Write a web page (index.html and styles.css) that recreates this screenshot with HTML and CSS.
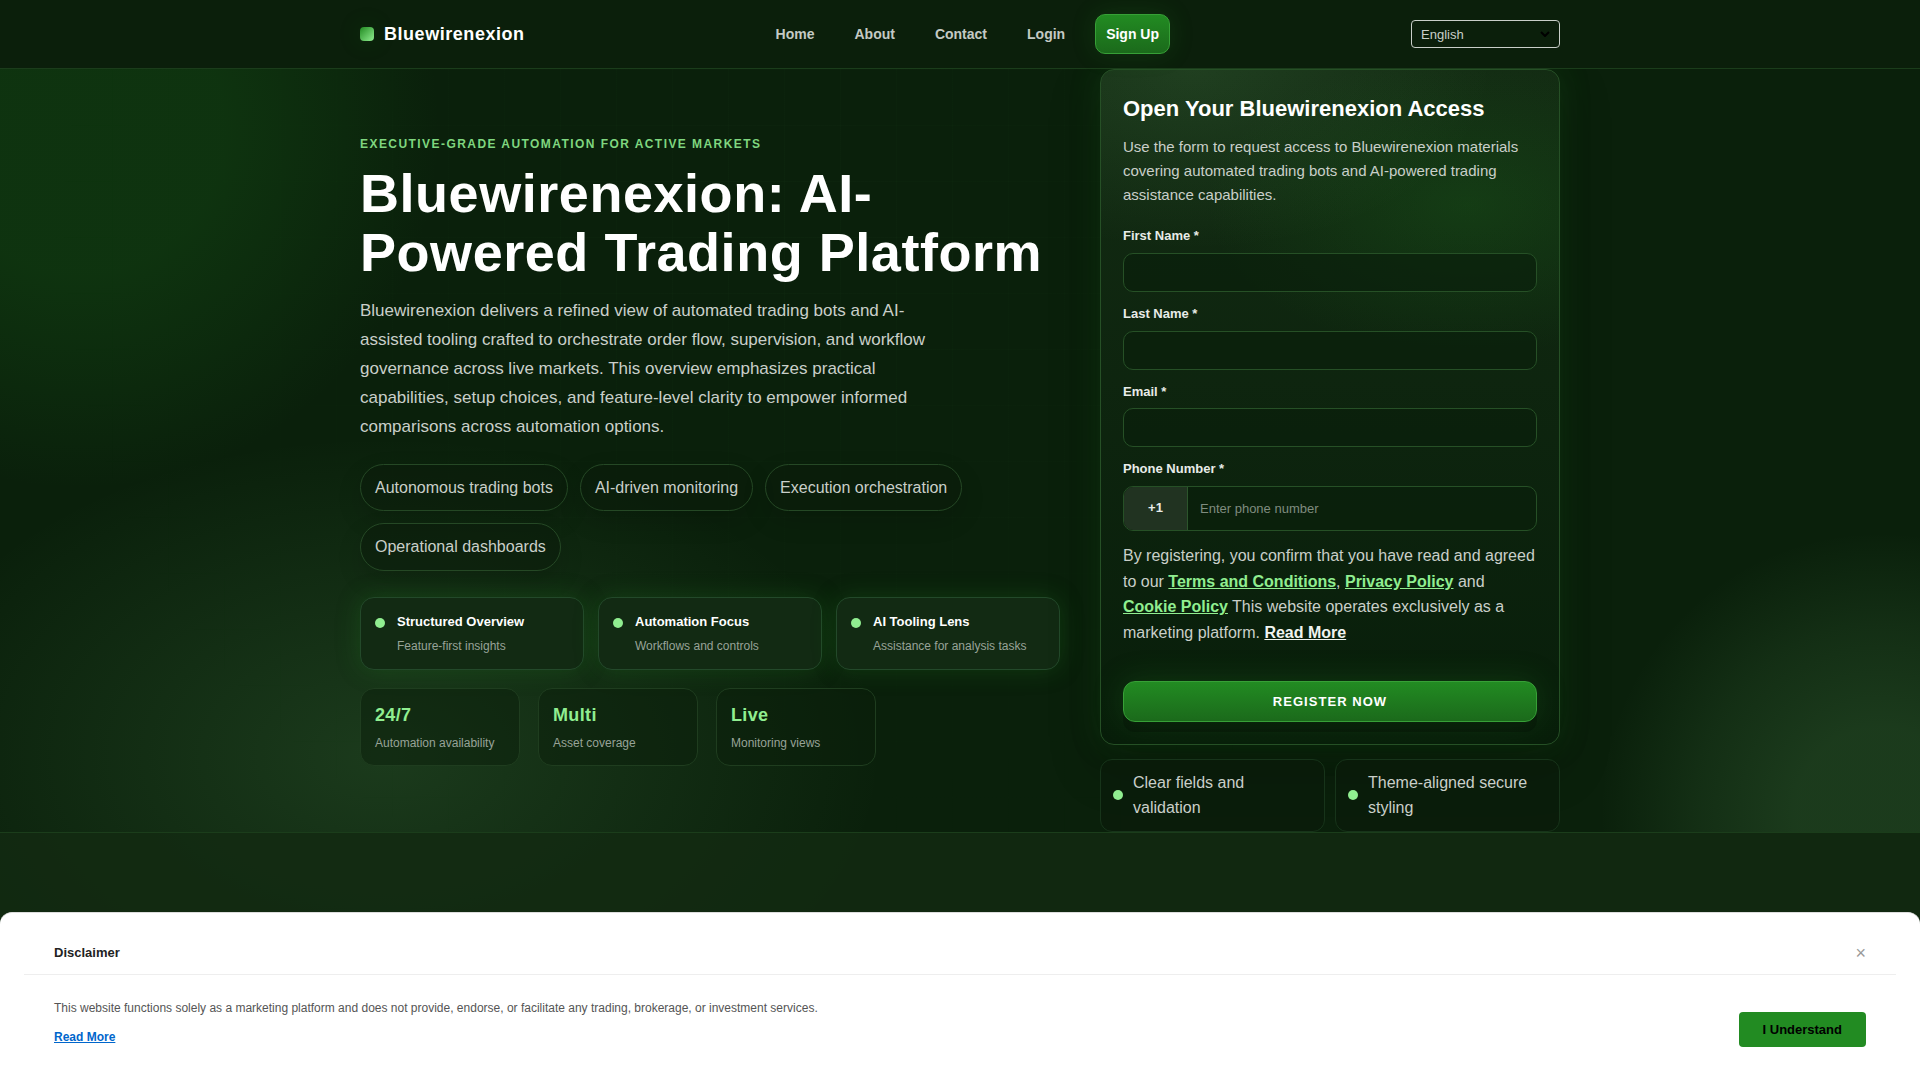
FILE: index.html
```
<!DOCTYPE html>
<html lang="en">

<head>
    <meta charset="UTF-8">
    <meta name="viewport" content="width=device-width, initial-scale=1.0">
    <title>Bluewirenexion</title>
    <link rel="stylesheet" href="styles.css">
</head>

<body>
    <header class="site-header">
        <div class="container header-inner">
            <a class="brand" href="#"><span class="brand-mark"></span>Bluewirenexion</a>
            <nav class="main-nav">
                <a href="#">Home</a>
                <a href="#about">About</a>
                <a href="#contact">Contact</a>
                <a href="#login">Login</a>
                <a class="nav-cta" href="#signup">Sign Up</a>
            </nav>
            <div class="lang">
                <select class="lang-select" aria-label="Language">
                    <option>English</option>
                    <option>Deutsch</option>
                    <option>Español</option>
                </select>
                <svg class="lang-arrow" viewBox="0 0 10 6" aria-hidden="true"><path d="M1 1l4 4 4-4" /></svg>
            </div>
        </div>
    </header>

    <main>
        <section class="hero">
            <div class="hero-grid"></div>
            <div class="container hero-inner">
                <div class="hero-copy">
                    <p class="eyebrow">Executive-grade automation for active markets</p>
                    <h1>Bluewirenexion: AI-Powered Trading Platform</h1>
                    <p class="lead">Bluewirenexion delivers a refined view of automated trading bots and AI-assisted tooling crafted to orchestrate order flow, supervision, and workflow governance across live markets. This overview emphasizes practical capabilities, setup choices, and feature-level clarity to empower informed comparisons across automation options.</p>

                    <ul class="pills">
                        <li>Autonomous trading bots</li>
                        <li>AI-driven monitoring</li>
                        <li>Execution orchestration</li>
                        <li>Operational dashboards</li>
                    </ul>

                    <div class="cards">
                        <div class="card">
                            <span class="dot"></span>
                            <div>
                                <strong>Structured Overview</strong>
                                <p>Feature-first insights</p>
                            </div>
                        </div>
                        <div class="card">
                            <span class="dot"></span>
                            <div>
                                <strong>Automation Focus</strong>
                                <p>Workflows and controls</p>
                            </div>
                        </div>
                        <div class="card">
                            <span class="dot"></span>
                            <div>
                                <strong>AI Tooling Lens</strong>
                                <p>Assistance for analysis tasks</p>
                            </div>
                        </div>
                    </div>

                    <div class="stats">
                        <div class="stat">
                            <strong>24/7</strong>
                            <p>Automation availability</p>
                        </div>
                        <div class="stat">
                            <strong>Multi</strong>
                            <p>Asset coverage</p>
                        </div>
                        <div class="stat">
                            <strong>Live</strong>
                            <p>Monitoring views</p>
                        </div>
                    </div>
                </div>

                <div class="hero-side" id="signup">
                    <form class="form-card">
                        <h2>Open Your Bluewirenexion Access</h2>
                        <p class="form-intro">Use the form to request access to Bluewirenexion materials covering automated trading bots and AI-powered trading assistance capabilities.</p>

                        <div class="field">
                            <label for="firstName">First Name *</label>
                            <input type="text" id="firstName" required>
                        </div>
                        <div class="field">
                            <label for="lastName">Last Name *</label>
                            <input type="text" id="lastName" required>
                        </div>
                        <div class="field">
                            <label for="email">Email *</label>
                            <input type="email" id="email" required>
                        </div>
                        <div class="field">
                            <label for="phone">Phone Number *</label>
                            <div class="phone">
                                <span class="phone-code">+1</span>
                                <input type="tel" id="phone" placeholder="Enter phone number" required>
                            </div>
                        </div>

                        <p class="terms">By registering, you confirm that you have read and agreed to our <a href="#">Terms and Conditions</a>, <a href="#">Privacy Policy</a> and <a href="#">Cookie Policy</a> This website operates exclusively as a marketing platform. <a class="more" href="#">Read More</a></p>

                        <button type="submit" class="btn-register">Register now</button>
                    </form>

                    <ul class="notes">
                        <li><span class="dot"></span>Clear fields and validation</li>
                        <li><span class="dot"></span>Theme-aligned secure styling</li>
                    </ul>
                </div>
            </div>
        </section>

        <section class="next-section" id="about"></section>
    </main>

    <div class="disclaimer" role="dialog" aria-labelledby="disclaimerTitle">
        <div class="disclaimer-head">
            <h3 id="disclaimerTitle">Disclaimer</h3>
            <button type="button" class="btn-close" aria-label="Close">×</button>
        </div>
        <div class="disclaimer-body">
            <div>
                <p>This website functions solely as a marketing platform and does not provide, endorse, or facilitate any trading, brokerage, or investment services.</p>
                <a href="#">Read More</a>
            </div>
            <button type="button" class="btn-accept">I Understand</button>
        </div>
    </div>
</body>

</html>
```
FILE: styles.css
```
* {
    box-sizing: border-box;
    margin: 0;
    padding: 0;
}

body {
    display: flex;
    flex-direction: column;
    min-height: 100vh;
    font-family: "Liberation Sans", Arial, sans-serif;
    font-size: 16px;
    line-height: 1.6;
    color: #c9cfc9;
    background:
        radial-gradient(ellipse 500px 320px at 20% 70%, rgba(144, 238, 144, 0.13), transparent),
        #0a200b;
}

main {
    display: flex;
    flex: 1;
    flex-direction: column;
}

ul {
    list-style: none;
}

.container {
    width: 100%;
    max-width: 1200px;
    margin: 0 auto;
}

/* header */
.site-header {
    position: relative;
    z-index: 2;
    border-bottom: 1px solid #1b3d1b;
    background: #0b1f0b;
}

.header-inner {
    display: flex;
    align-items: center;
    justify-content: space-between;
    padding: 14px 0;
}

.brand {
    display: flex;
    align-items: center;
    gap: 10px;
    color: #fff;
    font-size: 18px;
    font-weight: bold;
    letter-spacing: 0.03em;
    text-decoration: none;
}

.brand-mark {
    width: 14px;
    height: 14px;
    border-radius: 4px;
    background: linear-gradient(135deg, #228b22, #90ee90);
    box-shadow: 0 0 24px rgba(34, 139, 34, 0.2);
}

.main-nav {
    display: flex;
    gap: 20px;
}

.main-nav a {
    padding: 0 10px;
    line-height: 40px;
    color: #c4cac4;
    font-size: 14px;
    font-weight: bold;
    text-decoration: none;
}

.main-nav .nav-cta {
    line-height: 38px;
    border: 1px solid #37a037;
    border-radius: 10px;
    color: #fff;
    background: linear-gradient(180deg, #228b22, #1b6a1b);
    box-shadow: 0 0 24px rgba(34, 139, 34, 0.2);
}

.lang {
    position: relative;
}

.lang-select {
    display: block;
    appearance: none;
    width: 149px;
    height: 28px;
    padding: 0 9px;
    border: 1px solid #c9cfc9;
    border-radius: 4px;
    background: transparent;
    color: #c9cfc9;
    font: 13px "Liberation Sans", Arial, sans-serif;
}

.lang-arrow {
    position: absolute;
    right: 10px;
    top: 11px;
    width: 10px;
    height: 6px;
    fill: none;
    stroke: #000;
    stroke-width: 2;
    pointer-events: none;
}

/* hero */
.hero {
    position: relative;
    overflow: hidden;
}

/* soft glows in the corners */
.hero::before,
.hero::after {
    content: "";
    position: absolute;
    border-radius: 50%;
}

.hero::before {
    left: -280px;
    top: -300px;
    width: 720px;
    height: 720px;
    background: radial-gradient(closest-side, rgba(34, 139, 34, 0.18) 40%, rgba(34, 139, 34, 0.1) 68%, transparent);
}

.hero::after {
    right: -240px;
    bottom: -260px;
    width: 560px;
    height: 560px;
    background: radial-gradient(closest-side, rgba(144, 238, 144, 0.13) 30%, rgba(144, 238, 144, 0.07) 66%, transparent);
}

.hero-grid {
    position: absolute;
    inset: 0;
    background:
        linear-gradient(90deg, rgba(144, 238, 144, 0.02) 1px, transparent 1px),
        linear-gradient(rgba(144, 238, 144, 0.02) 1px, transparent 1px);
    background-size: 56px 56px;
    mask-image: radial-gradient(circle at 40% 20%, #000, transparent 60%);
}

.hero-inner {
    position: relative;
    z-index: 1;
    display: grid;
    grid-template-columns: 1fr 460px;
    align-items: center;
    gap: 40px;
}

.eyebrow {
    color: #7fd67f;
    font-size: 12px;
    font-weight: bold;
    letter-spacing: 0.12em;
    text-transform: uppercase;
}

h1 {
    margin-top: 10px;
    color: #fff;
    font-size: 54px;
    line-height: 59px;
    letter-spacing: 0.01em;
}

.lead {
    max-width: 580px;
    margin-top: 14px;
    font-size: 17px;
    line-height: 29px;
}

.pills {
    display: flex;
    flex-wrap: wrap;
    gap: 12px;
    margin-top: 23px;
}

.pills li {
    padding: 10px 14px;
    border: 1px solid #254825;
    border-radius: 999px;
    background: rgba(10, 26, 10, 0.5);
    box-shadow: 0 10px 24px rgba(0, 0, 0, 0.15);
}

.cards {
    display: grid;
    grid-template-columns: repeat(3, 1fr);
    gap: 14px;
    margin-top: 26px;
}

.card {
    display: flex;
    align-items: flex-start;
    gap: 12px;
    padding: 14px 14px 13px;
    border: 1px solid #23492a;
    border-radius: 14px;
    background: #122a13;
    box-shadow: 0 0 24px rgba(34, 139, 34, 0.25);
}

.dot {
    flex: none;
    width: 10px;
    height: 10px;
    border-radius: 50%;
    background: #90ee90;
}

.card .dot {
    margin-top: 6px;
}

.card strong {
    display: block;
    color: #fff;
    font-size: 13px;
}

.card p,
.stat p {
    margin-top: 4px;
    color: #98a398;
    font-size: 12px;
}

.stats {
    display: flex;
    gap: 18px;
    margin-top: 18px;
}

.stat {
    width: 160px;
    padding: 12px 14px;
    border: 1px solid #1f3d1f;
    border-radius: 14px;
    background: rgba(9, 30, 10, 0.5);
}

.stat strong {
    display: block;
    color: #90ee90;
    font-size: 18px;
    letter-spacing: 0.02em;
}

/* sign up form */
.form-card {
    padding: 22px;
    border: 1px solid #265026;
    border-radius: 14px;
    background:
        radial-gradient(ellipse 300px 180px at 20% 0%, rgba(144, 238, 144, 0.1), transparent),
        radial-gradient(ellipse 260px 150px at 80% 20%, rgba(34, 139, 34, 0.2), transparent),
        linear-gradient(180deg, #132b13, #081e0a);
    box-shadow: 0 0 32px rgba(34, 139, 34, 0.2), 0 20px 50px rgba(0, 0, 0, 0.3);
}

.form-card h2 {
    color: #fff;
    font-size: 22px;
    line-height: 34px;
}

.form-intro {
    margin: 9px 0 19px;
    font-size: 15px;
    line-height: 24px;
}

.field {
    margin-bottom: 12px;
}

.field label {
    display: block;
    margin-bottom: 6px;
    color: #e8ece8;
    font-size: 13px;
    font-weight: bold;
}

.field input {
    display: block;
    width: 100%;
    height: 39px;
    padding: 0 12px;
    border: 1px solid #265026;
    border-radius: 10px;
    background: rgba(10, 31, 11, 0.7);
    color: #fff;
    font: 13px "Liberation Sans", Arial, sans-serif;
}

.field input::placeholder {
    color: #7f8c7f;
}

.phone {
    display: flex;
    height: 45px;
    border: 1px solid #265026;
    border-radius: 10px;
    background: rgba(10, 31, 11, 0.7);
    overflow: hidden;
}

.phone-code {
    display: flex;
    align-items: center;
    justify-content: center;
    width: 64px;
    border-right: 1px solid #2c552c;
    background: #213321;
    color: #e8ece8;
    font-size: 13px;
    font-weight: bold;
}

.phone input {
    flex: 1;
    width: auto;
    height: 100%;
    border: 0;
    background: transparent;
}

.terms a {
    color: #90ee90;
    font-weight: bold;
}

.terms .more {
    color: #f0f4f0;
}

.btn-register {
    display: block;
    width: 100%;
    height: 41px;
    margin-top: 35px;
    border: 1px solid #37a037;
    border-radius: 12px;
    background: linear-gradient(180deg, #228b22, #1b6a1b);
    box-shadow: 0 10px 0 rgba(0, 0, 0, 0.2), 0 0 30px rgba(34, 139, 34, 0.25);
    color: #fff;
    font: bold 13px "Liberation Sans", Arial, sans-serif;
    letter-spacing: 0.08em;
    text-transform: uppercase;
}

.notes {
    display: grid;
    grid-template-columns: 1fr 1fr;
    gap: 10px;
    margin-top: 14px;
}

.notes li {
    display: flex;
    align-items: center;
    gap: 10px;
    padding: 10px 12px;
    border: 1px solid #17341a;
    border-radius: 12px;
    background: rgba(10, 28, 10, 0.8);
}

.next-section {
    flex: 1;
    border-top: 1px solid #1b3d1b;
    background: rgba(19, 42, 18, 0.85);
}

/* disclaimer bar */
.disclaimer {
    position: fixed;
    z-index: 10;
    left: 0;
    right: 0;
    bottom: 0;
    padding: 20px 24px 33px;
    border-top: 1px solid #ddd;
    border-radius: 12px 12px 0 0;
    background: #fff;
}

.disclaimer-head {
    display: flex;
    align-items: center;
    justify-content: space-between;
    padding: 10px 30px;
    border-bottom: 1px solid #eee;
}

.disclaimer-head h3 {
    color: #222;
    font-size: 13px;
}

.btn-close {
    border: 0;
    background: none;
    color: #999;
    font: 18px/20px "Liberation Sans", Arial, sans-serif;
}

.disclaimer-body {
    display: flex;
    align-items: flex-end;
    justify-content: space-between;
    padding: 24px 30px 0;
}

.disclaimer-body p {
    margin-bottom: 10px;
    color: #555;
    font-size: 12px;
}

.disclaimer-body a {
    display: block;
    color: #0066cc;
    font-size: 12px;
    font-weight: bold;
}

.btn-accept {
    height: 35px;
    padding: 0 24px;
    border: 0;
    border-radius: 4px;
    background: #228b22;
    color: #000;
    font: bold 13px "Liberation Sans", Arial, sans-serif;
}
```
